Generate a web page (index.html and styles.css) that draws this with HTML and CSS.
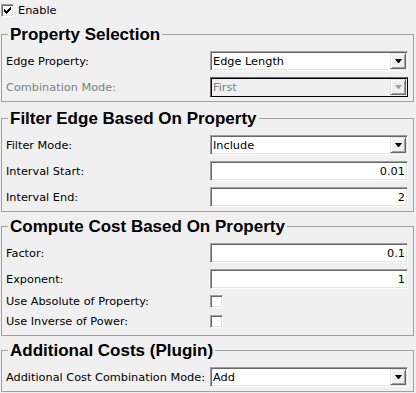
FILE: index.html
```html
<!DOCTYPE html>
<html lang="en">
<head>
  <meta charset="UTF-8" />
  <title>Cost Function Settings</title>
  <link rel="stylesheet" href="styles.css">
</head>
<body>
  <div class="panel">
    <div class="enable">
      <span class="check">
        <svg width="11" height="11" viewBox="0 0 11 11" shape-rendering="crispEdges"><path d="M2 4h1v3h-1z M3 5h1v3h-1z M4 6h1v3h-1z M5 5h1v3h-1z M6 4h1v3h-1z M7 3h1v3h-1z M8 2h1v3h-1z" fill="#000"/></svg>
      </span>
      <span>Enable</span>
    </div>

    <div class="group group-first">
      <h2 class="group-title">Property Selection</h2>
      <div class="row">
        <span class="label">Edge Property:</span>
        <div class="combo">
          <span class="combo-text">Edge Length</span>
          <span class="combo-btn"><i class="arrow"></i></span>
        </div>
      </div>
      <div class="row">
        <span class="label label-disabled">Combination Mode:</span>
        <div class="combo combo-disabled">
          <span class="combo-text">First</span>
          <span class="combo-btn"><i class="arrow"></i></span>
        </div>
      </div>
    </div>

    <div class="group">
      <h2 class="group-title">Filter Edge Based On Property</h2>
      <div class="row">
        <span class="label">Filter Mode:</span>
        <div class="combo">
          <span class="combo-text">Include</span>
          <span class="combo-btn"><i class="arrow"></i></span>
        </div>
      </div>
      <div class="row">
        <span class="label">Interval Start:</span>
        <input class="field" type="text" value="0.01">
      </div>
      <div class="row">
        <span class="label">Interval End:</span>
        <input class="field" type="text" value="2">
      </div>
    </div>

    <div class="group group-tight">
      <h2 class="group-title">Compute Cost Based On Property</h2>
      <div class="row">
        <span class="label">Factor:</span>
        <input class="field" type="text" value="0.1">
      </div>
      <div class="row">
        <span class="label">Exponent:</span>
        <input class="field" type="text" value="1">
      </div>
      <div class="row row-check">
        <span class="label">Use Absolute of Property:</span>
        <span class="check"></span>
      </div>
      <div class="row row-check">
        <span class="label">Use Inverse of Power:</span>
        <span class="check"></span>
      </div>
    </div>

    <div class="group group-tight">
      <h2 class="group-title">Additional Costs (Plugin)</h2>
      <div class="row">
        <span class="label">Additional Cost Combination Mode:</span>
        <div class="combo">
          <span class="combo-text">Add</span>
          <span class="combo-btn"><i class="arrow"></i></span>
        </div>
      </div>
    </div>
  </div>
</body>
</html>
```

FILE: styles.css
```css
body {
  margin: 0;
  background-color: #f0f0f0;
  font-family: "DejaVu Sans", Tahoma, sans-serif;
  font-size: 11.3px;
  color: #000;
}

.panel {
  width: 413px;
  margin-left: 1px;
}

.enable {
  display: flex;
  align-items: center;
  gap: 4px;
  height: 21px;
}

.check {
  display: block;
  flex: none;
  width: 13px;
  height: 13px;
  box-sizing: border-box;
  background-color: #fff;
  border: 1px solid;
  border-color: #a0a0a0 #fff #fff #a0a0a0;
  box-shadow: inset 1px 1px #696969, inset -1px -1px #e3e3e3;
}

.check svg {
  display: block;
}

.group {
  position: relative;
  border: 1px solid #a0a0a0;
  padding: 16px 5px 4px 4px;
  margin-top: 16px;
}

.group-first {
  margin-top: 13px;
}

.group-tight {
  margin-top: 14px;
}

.group-title {
  position: absolute;
  top: -9px;
  left: 6px;
  margin: 0;
  padding: 0 2px;
  font-family: "Liberation Sans", Arial, sans-serif;
  font-size: 17px;
  font-weight: 700;
  line-height: 18px;
  background-color: #f0f0f0;
}

.row {
  display: flex;
  align-items: center;
  height: 20px;
}

.row + .row {
  margin-top: 6px;
}

.row + .row-check {
  margin-top: 2px;
}

.row-check + .row-check {
  margin-top: 0;
}

.label {
  flex: none;
  width: 204px;
}

.label-disabled {
  color: #808080;
}

.combo,
.field {
  width: 198px;
  height: 20px;
  box-sizing: border-box;
  background-color: #fff;
  border: 1px solid;
  border-color: #a0a0a0 #fff #fff #a0a0a0;
  box-shadow: inset 1px 1px #696969, inset -1px -1px #e3e3e3;
}

.combo {
  display: flex;
  align-items: center;
  padding: 1px;
}

.combo-text {
  flex: 1;
  padding-left: 1px;
}

.combo-btn {
  display: flex;
  align-items: center;
  justify-content: center;
  width: 16px;
  height: 16px;
  box-sizing: border-box;
  background-color: #f0f0f0;
  border: 1px solid;
  border-color: #e3e3e3 #696969 #696969 #e3e3e3;
  box-shadow: inset 1px 1px #fff, inset -1px -1px #a0a0a0;
}

.arrow {
  width: 1px;
  height: 0;
  border-top: 4px solid #000;
  border-left: 3px solid transparent;
  border-right: 3px solid transparent;
}

.combo-disabled {
  background-color: #f0f0f0;
  color: #808080;
  border-color: #696969 #000 #000 #696969;
  box-shadow: inset 1px 1px #000, inset -1px -1px #f0f0f0;
}

.combo-disabled .arrow {
  border-top-color: #a0a0a0;
}

.field {
  margin: 0;
  padding: 0 2px;
  font: inherit;
  color: #000;
  text-align: right;
  outline: none;
}
```
